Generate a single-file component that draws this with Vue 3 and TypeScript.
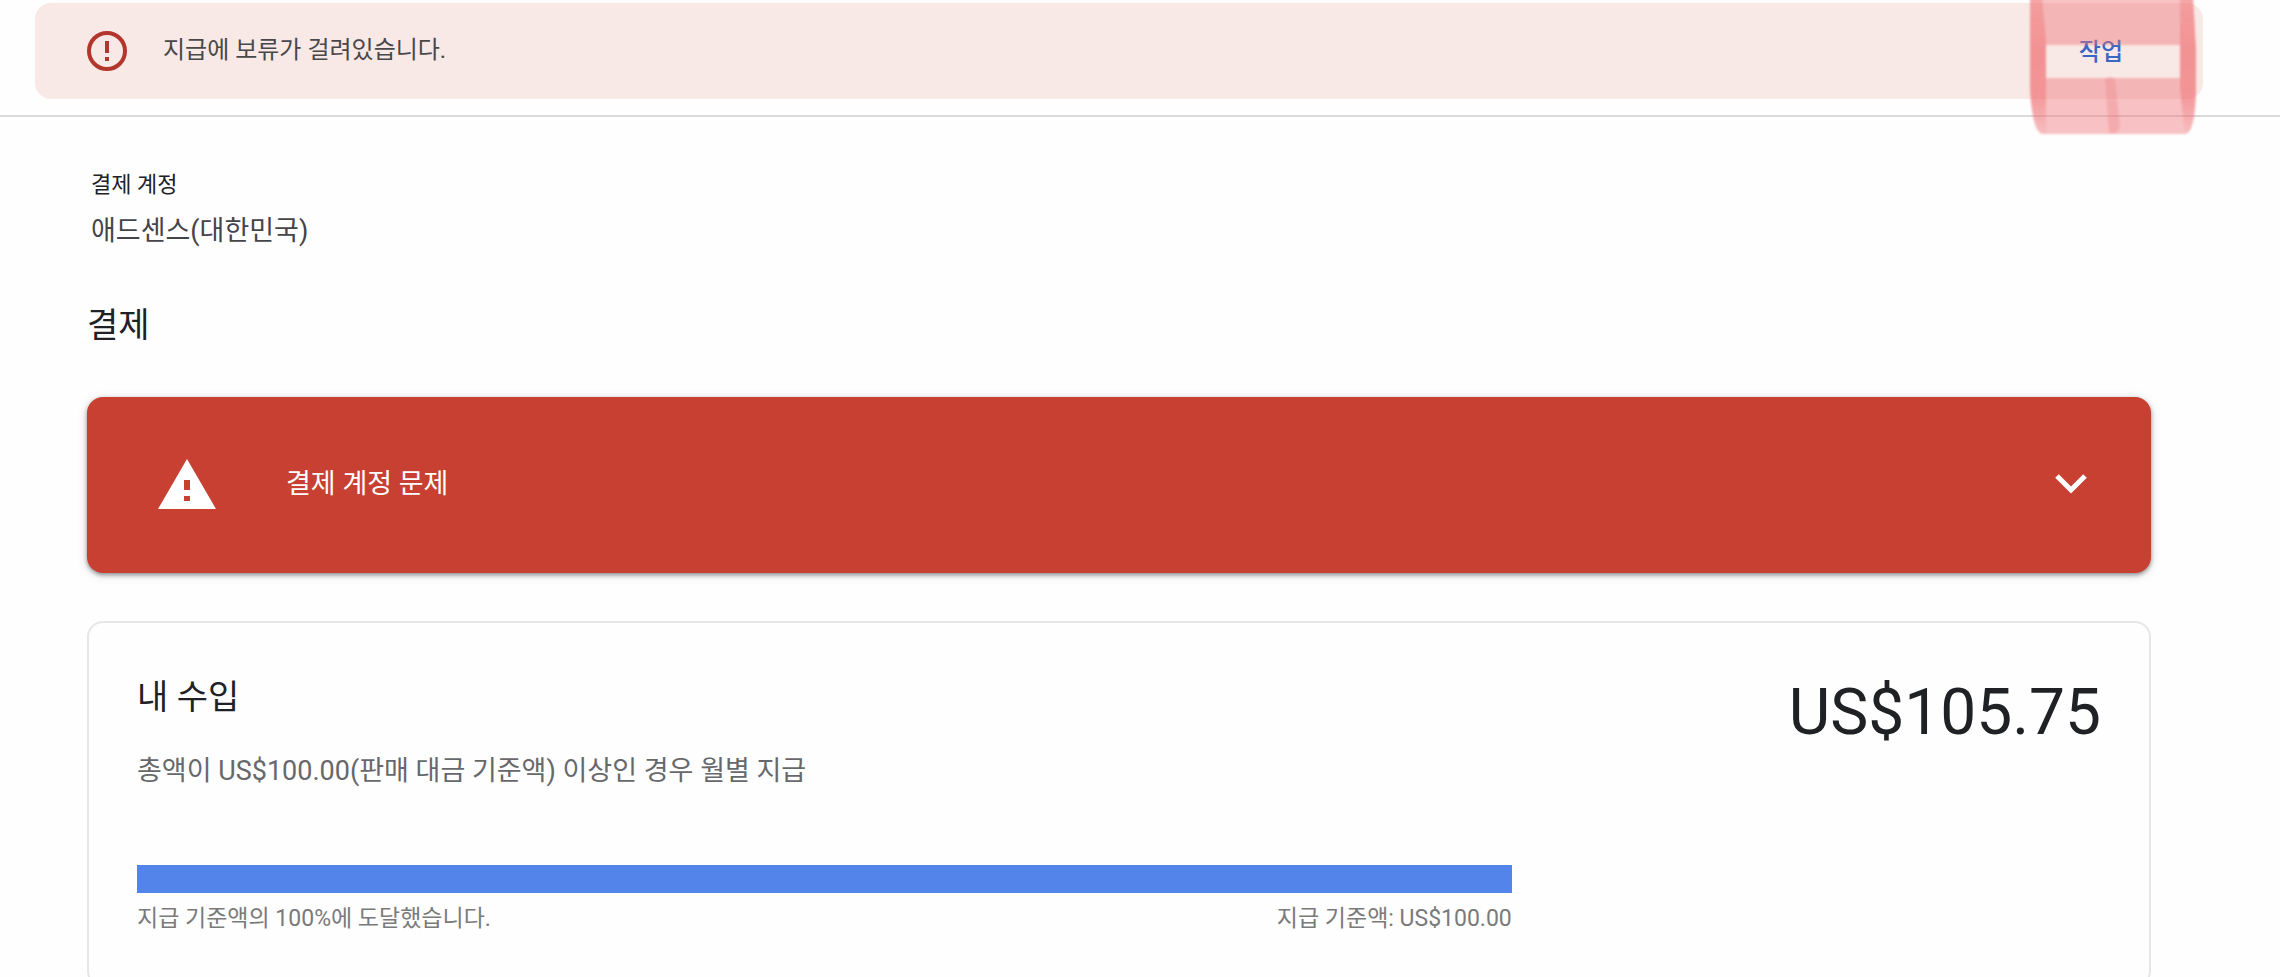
<script setup lang="ts">
import { ref } from 'vue'

const expanded = ref(false)
const progress = ref(100)
</script>

<template>
  <div class="page">
    <header class="top">
      <div class="banner" role="alert">
        <svg class="alert-icon" viewBox="0 0 40 40" aria-hidden="true">
          <circle cx="20" cy="20" r="18" fill="none" stroke="#b3362c" stroke-width="4" />
          <path d="M18 10h4v12h-4zM18 26h4v4h-4z" fill="#b3362c" />
        </svg>
        <p class="banner-text">지급에 보류가 걸려있습니다.</p>
        <button class="action" type="button">작업</button>
        <svg class="marker" viewBox="0 0 176 136" aria-hidden="true">
          <defs>
            <filter id="soft" x="-10%" y="-10%" width="120%" height="120%">
              <feGaussianBlur stdDeviation="1" />
            </filter>
            <linearGradient id="fade" x1="0" y1="0" x2="0" y2="1">
              <stop offset="0" stop-color="#f0686a" stop-opacity="0.3" />
              <stop offset="0.4" stop-color="#f0686a" stop-opacity="0.46" />
              <stop offset="0.75" stop-color="#f0686a" stop-opacity="0.42" />
              <stop offset="1" stop-color="#f0686a" stop-opacity="0.04" />
            </linearGradient>
          </defs>
          <g filter="url(#soft)">
            <path
              fill="#f0787d"
              fill-opacity="0.45"
              fill-rule="evenodd"
              d="M6-4H169L172 50V90Q171 134 161 134H18Q8 132 6 88ZM22 45V78H156V45Z"
            />
            <path fill="url(#fade)" d="M6-4H18L22 40V134H18Q8 126 6 88Z" />
            <path fill="url(#fade)" d="M156-4H169L172 50V90Q171 134 161 134L156 90Z" />
            <path fill="#ea6a70" fill-opacity="0.25" d="M81 79Q86 75 91 79L96 127Q92 137 85 132Z" />
          </g>
        </svg>
      </div>
    </header>

    <main class="content">
      <dl class="account">
        <dt>결제 계정</dt>
        <dd>애드센스(대한민국)</dd>
      </dl>

      <h1 class="title">결제</h1>

      <button class="issue" type="button" :aria-expanded="expanded" @click="expanded = !expanded">
        <svg class="warn-icon" viewBox="0 0 58 50" aria-hidden="true">
          <path fill="#fff" fill-rule="evenodd" d="M29 0L58 50H0ZM26 21v10h6v-10zM26 37v5h6v-5z" />
        </svg>
        <span class="issue-text">결제 계정 문제</span>
        <svg class="chevron" viewBox="0 0 32 20" aria-hidden="true">
          <path d="M2 2L16 16L30 2" fill="none" stroke="#fff" stroke-width="5" />
        </svg>
      </button>

      <section class="earnings" aria-labelledby="earnings-title">
        <div class="summary">
          <div>
            <h2 id="earnings-title" class="title">내 수입</h2>
            <p class="terms">총액이 US$100.00(판매 대금 기준액) 이상인 경우 월별 지급</p>
          </div>
          <p class="amount">US$105.75</p>
        </div>
        <div class="threshold">
          <div class="track" role="progressbar" aria-label="지급 기준액" :aria-valuenow="progress">
            <div class="fill" :style="{ width: progress + '%' }"></div>
          </div>
          <div class="labels">
            <span>지급 기준액의 {{ progress }}%에 도달했습니다.</span>
            <span>지급 기준액: US$100.00</span>
          </div>
        </div>
      </section>
    </main>
  </div>
</template>

<style>
body {
  margin: 0;
  background: #fefefe;
}
</style>

<style scoped>
.page {
  height: 100vh;
  overflow: hidden;
  font-family: Roboto, 'Noto Sans CJK KR', sans-serif;
  color: #202124;
}
p,
h1,
h2,
dl,
dd {
  margin: 0;
  font-weight: 400;
}
button {
  border: 0;
  font: inherit;
  text-align: left;
  cursor: pointer;
}
.top {
  padding: 3px 77px 16px 35px;
  border-bottom: 2px solid #dadada;
}
.banner {
  position: relative;
  display: flex;
  align-items: center;
  height: 96px;
  padding: 0 80px 0 52px;
  box-sizing: border-box;
  border-radius: 16px;
  background: #f8e9e6;
}
.alert-icon {
  width: 40px;
  height: 40px;
  margin-right: 36px;
}
.banner-text {
  flex: 1;
  padding-bottom: 2px;
  font-size: 24px;
  line-height: 32px;
  color: #48484a;
}
.action {
  padding: 2px 0 0;
  background: none;
  font-size: 24px;
  line-height: 32px;
  font-weight: 500;
  color: #3a66c5;
}
.marker {
  position: absolute;
  top: -3px;
  right: 3px;
  width: 176px;
  height: 136px;
  pointer-events: none;
}
.content {
  padding: 52px 129px 0 87px;
}
.account {
  padding-left: 4px;
}
.account dt {
  font-size: 22px;
  line-height: 32px;
}
.account dd {
  margin-top: 12px;
  font-size: 27px;
  line-height: 36px;
  color: #444548;
}
.title {
  font-size: 34px;
  line-height: 48px;
}
.content > .title {
  margin: 52px 0 48px;
}
.issue {
  display: flex;
  align-items: center;
  width: 100%;
  height: 176px;
  padding: 0 64px 2px 71px;
  border-radius: 16px;
  background: #c74032;
  color: #fff;
  box-shadow: 0 2px 4px rgba(0, 0, 0, 0.4), 0 2px 12px rgba(0, 0, 0, 0.12);
}
.warn-icon {
  width: 58px;
  height: 50px;
  margin-right: 70px;
}
.issue-text {
  flex: 1;
  font-size: 27px;
  line-height: 36px;
}
.chevron {
  width: 32px;
  height: 20px;
}
.earnings {
  margin-top: 48px;
  padding: 50px 48px 48px;
  border: 2px solid #e6e6e6;
  border-radius: 16px;
}
.summary {
  display: flex;
  justify-content: space-between;
}
.terms {
  margin-top: 32px;
  font-size: 27px;
  line-height: 36px;
  color: #67686b;
}
.amount {
  font-size: 64px;
  line-height: 80px;
}
.threshold {
  width: 70%;
  margin-top: 76px;
}
.fill {
  height: 28px;
  background: #5284ea;
}
.labels {
  display: flex;
  justify-content: space-between;
  margin-top: 8px;
  font-size: 23px;
  line-height: 36px;
  color: #7a7a7a;
}
</style>
